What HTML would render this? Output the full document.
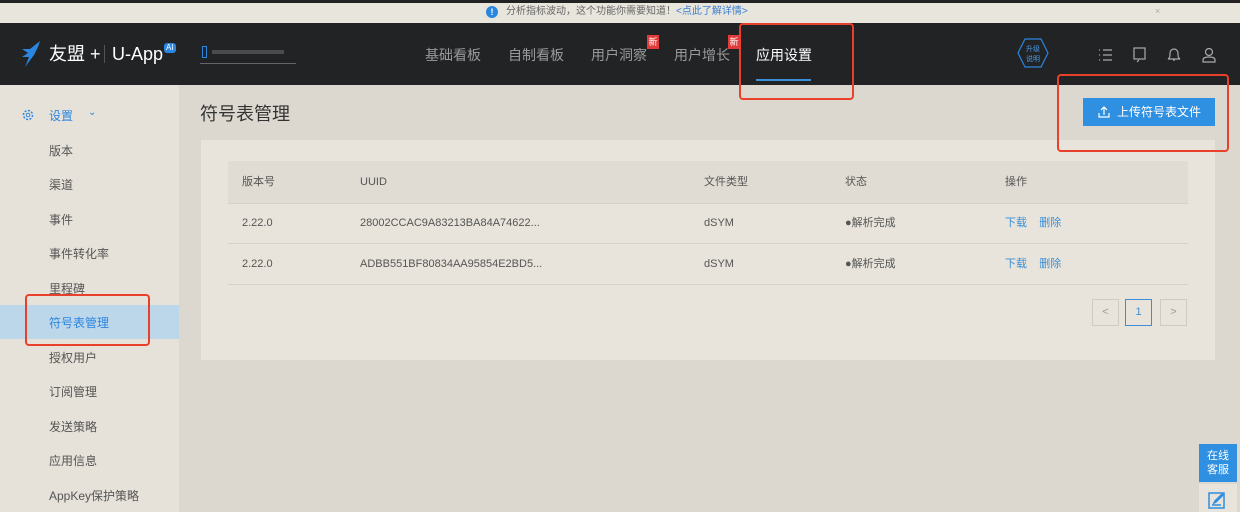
<!DOCTYPE html>
<html><head><meta charset="utf-8"><style>
*{margin:0;padding:0;box-sizing:border-box}
body{width:1240px;height:512px;overflow:hidden;background:#dcd8cf;font-family:"Liberation Sans","Noto Sans CJK SC",sans-serif;position:relative;color:#333}
.abs{position:absolute}
.top{left:0;top:0;width:1240px;height:23px;background:#e8e5dc;border-top:3px solid #222}
.nav{left:0;top:23px;width:1240px;height:62px;background:#212325}
.side{left:0;top:85px;width:179px;height:427px;background:#e6e2d9}
.si{position:absolute;left:49px;font-size:12px;color:#555}
.card{left:201px;top:140px;width:1014px;height:220px;background:#e8e4db}
.th{left:228px;top:161px;width:960px;height:42px;background:#e0dcd3}
.t{position:absolute;font-size:11px;color:#555;line-height:14px;height:14px}
.line{position:absolute;left:228px;width:960px;height:1px;background:#d6d2c9}
.red{position:absolute;border:2px solid #e8402a;border-radius:4px}
.n{position:absolute;font-size:14px;color:#9a9a9a}
.badge{position:absolute;background:#e23b3b;color:#fff;font-size:9px;width:12px;height:14px;text-align:center;line-height:14px}
.pg{position:absolute;top:299px;width:27px;height:27px;border:1px solid #cfcbc2;font-size:11px;color:#999;text-align:center;line-height:25px}
</style></head><body>
<div class="abs top"><span style="position:absolute;left:486px;top:3px;width:12px;height:12px;border-radius:50%;background:#2a86e0;color:#fff;font-size:9px;text-align:center;line-height:12px;font-weight:bold">!</span><span style="position:absolute;left:506px;top:2px;font-size:10px;color:#666;line-height:14px">分析指标波动，这个功能你需要知道！<span style="color:#3a7fd0">&lt;点此了解详情&gt;</span></span><span style="position:absolute;left:1155px;top:3px;font-size:9px;color:#aaa">×</span></div>
<div class="abs nav">
<svg style="position:absolute;left:20px;top:18px" width="24" height="26" viewBox="0 0 24 26"><path d="M20 0 L10 8 L2 8 L8 12 L2 16 L9 16 L5 26 L14 14 L18 6Z" fill="#2a86e0"/></svg>
<span style="position:absolute;left:49px;top:19px;font-size:18px;color:#fff;line-height:24px">友盟 +</span>
<span style="position:absolute;left:104px;top:22px;width:1px;height:18px;background:#555"></span>
<span style="position:absolute;left:112px;top:19px;font-size:18px;color:#fff;line-height:24px">U-App</span>
<span style="position:absolute;left:164px;top:20px;font-size:8px;color:#fff;background:#2a86e0;border-radius:3px;padding:0 2px;line-height:10px">AI</span>
<span style="position:absolute;left:202px;top:23px;width:5px;height:12px;border:1px solid #2a86e0"></span>
<span style="position:absolute;left:212px;top:27px;width:72px;height:4px;background:#4a4b4c"></span>
<span style="position:absolute;left:200px;top:40px;width:96px;height:1px;background:#666"></span>
<span class="n" style="left:425px;top:22px">基础看板</span>
<span class="n" style="left:508px;top:22px">自制看板</span>
<span class="n" style="left:591px;top:22px">用户洞察</span><span class="badge" style="left:647px;top:12px">新</span>
<span class="n" style="left:674px;top:22px">用户增长</span><span class="badge" style="left:728px;top:12px">新</span>
<span class="n" style="left:756px;top:22px;color:#fff">应用设置</span>
<span style="position:absolute;left:756px;top:56px;width:55px;height:2px;background:#3a8fd8"></span>
<svg style="position:absolute;left:1017px;top:15px" width="32" height="30"><polygon points="8,1 24,1 31,15 24,29 8,29 1,15" fill="none" stroke="#2a86e0" stroke-width="1.2"/><text x="16" y="13" font-size="7" fill="#4a9ae8" text-anchor="middle" font-family="Noto Sans CJK SC">升级</text><text x="16" y="23" font-size="7" fill="#4a9ae8" text-anchor="middle" font-family="Noto Sans CJK SC">说明</text></svg>
<svg style="position:absolute;left:1098px;top:24px" width="120" height="16" fill="none" stroke="#aaa" stroke-width="1.2"><path d="M1 3h1M1 8h1M1 13h1M5 3h9M5 8h9M5 13h9"/><rect x="36" y="1" width="11" height="11"/><path d="M41 13l-2 2"/><path d="M75 13h2M70 12c2-1 2-3 2-6a4 4 0 0 1 8 0c0 3 0 5 2 6z"/><circle cx="111" cy="5" r="3.5"/><path d="M105 15v-2c0-2 2-3 6-3s6 1 6 3v2z"/></svg>
</div>
<div class="abs side">
<svg style="position:absolute;left:22px;top:24px" width="12" height="12"><circle cx="6" cy="6" r="4.5" fill="none" stroke="#2a86e0" stroke-width="1.5" stroke-dasharray="2 1.5"/><circle cx="6" cy="6" r="1.8" fill="none" stroke="#2a86e0"/></svg>
<span class="si" style="top:22px;color:#2a86e0">设置</span><span class="si" style="left:88px;top:22px;color:#2a86e0;font-size:10px">⌄</span>
<span class="si" style="top:57px">版本</span>
<span class="si" style="top:91px">渠道</span>
<span class="si" style="top:126px">事件</span>
<span class="si" style="top:160px">事件转化率</span>
<span class="si" style="top:195px">里程碑</span>
<div style="position:absolute;left:0;top:220px;width:179px;height:34px;background:#bcd6ea"></div>
<span class="si" style="top:229px;color:#2a86e0">符号表管理</span>
<span class="si" style="top:264px">授权用户</span>
<span class="si" style="top:298px">订阅管理</span>
<span class="si" style="top:333px">发送策略</span>
<span class="si" style="top:367px">应用信息</span>
<span class="si" style="top:402px">AppKey保护策略</span>
</div>
<div class="red" style="left:25px;top:294px;width:125px;height:52px"></div>
<span class="abs" style="left:200px;top:100px;font-size:18px;color:#333">符号表管理</span>
<div class="abs" style="left:1083px;top:98px;width:132px;height:28px;background:#2f8fe0;color:#fff;font-size:12px;line-height:28px;padding-left:34px">上传符号表文件</div>
<svg class="abs" style="left:1098px;top:106px" width="12" height="12" fill="none" stroke="#fff" stroke-width="1.2"><path d="M1 7v4h10V7M6 9V1M3 4l3-3 3 3"/></svg>
<div class="abs card"></div>
<div class="abs th"></div>
<span class="t" style="left:242px;top:175px">版本号</span><span class="t" style="left:360px;top:175px">UUID</span><span class="t" style="left:704px;top:175px">文件类型</span><span class="t" style="left:845px;top:175px">状态</span><span class="t" style="left:1005px;top:175px">操作</span>
<div class="line" style="top:203px"></div>
<span class="t" style="left:242px;top:216px">2.22.0</span><span class="t" style="left:360px;top:216px">28002CCAC9A83213BA84A74622...</span><span class="t" style="left:704px;top:216px">dSYM</span><span class="t" style="left:845px;top:216px">●解析完成</span><span class="t" style="left:1005px;top:216px;color:#3a8fd8">下载&nbsp;&nbsp;&nbsp;&nbsp;删除</span>
<div class="line" style="top:243px"></div>
<span class="t" style="left:242px;top:257px">2.22.0</span><span class="t" style="left:360px;top:257px">ADBB551BF80834AA95854E2BD5...</span><span class="t" style="left:704px;top:257px">dSYM</span><span class="t" style="left:845px;top:257px">●解析完成</span><span class="t" style="left:1005px;top:257px;color:#3a8fd8">下载&nbsp;&nbsp;&nbsp;&nbsp;删除</span>
<div class="line" style="top:284px"></div>
<div class="pg" style="left:1092px">&lt;</div><div class="pg" style="left:1125px;border-color:#3a8fd8;color:#3a8fd8">1</div><div class="pg" style="left:1160px">&gt;</div>
<div class="red" style="left:739px;top:23px;width:115px;height:77px"></div>
<div class="red" style="left:1057px;top:74px;width:172px;height:78px"></div>
<div class="abs" style="left:1199px;top:444px;width:38px;height:38px;background:#2f8fe0;color:#fff;font-size:11px;text-align:center;line-height:14px;padding-top:5px">在线<br>客服</div>
<div class="abs" style="left:1199px;top:484px;width:38px;height:28px;background:#e8e4db"></div>
<svg class="abs" style="left:1208px;top:491px" width="18" height="18" fill="none" stroke="#2f8fe0" stroke-width="1.5"><rect x="1" y="2" width="15" height="15"/><path d="M6 12l2-1 7-7-1-1-7 7zM4 14h9"/></svg>
</body></html>
